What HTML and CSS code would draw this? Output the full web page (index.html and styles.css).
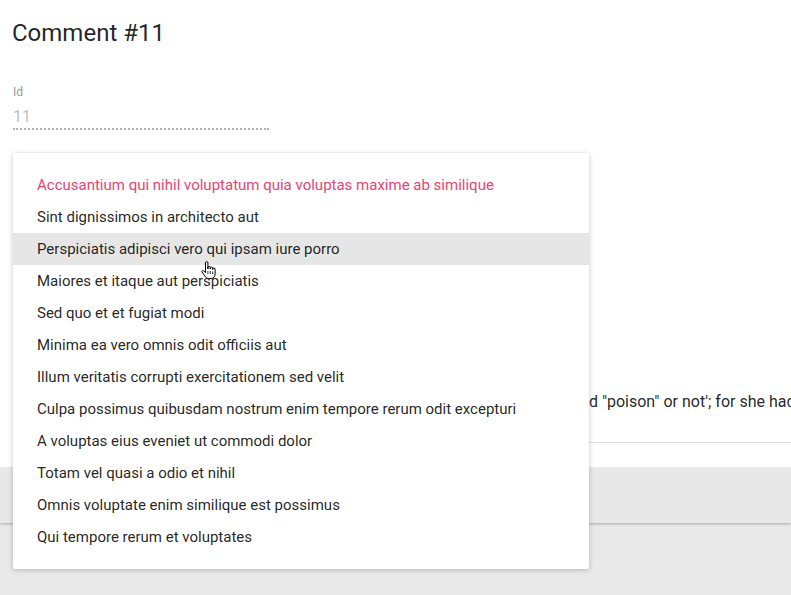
FILE: index.html
```html
<!DOCTYPE html>
<html>
<head>
<meta charset="utf-8">
<link rel="stylesheet" href="styles.css">
</head>
<body>
<div class="card">
  <div class="card-title"><h1>Comment #11</h1></div>
  <div class="form">
    <div class="field field-id">
      <label class="field-label">Id</label>
      <div class="field-value">11</div>
    </div>
    <div class="field field-body">
      <div class="body-text"><span class="body-lead">'and see whether it's marke</span>d "poison" or not'; for she had read several nice little histories about children</div>
    </div>
  </div>
  <div class="toolbar"></div>
</div>

<div class="menu">
  <ul class="menu-list">
    <li class="menu-item selected">Accusantium qui nihil voluptatum quia voluptas maxime ab similique</li>
    <li class="menu-item">Sint dignissimos in architecto aut</li>
    <li class="menu-item hover">Perspiciatis adipisci vero qui ipsam iure porro</li>
    <li class="menu-item">Maiores et itaque aut perspiciatis</li>
    <li class="menu-item">Sed quo et et fugiat modi</li>
    <li class="menu-item">Minima ea vero omnis odit officiis aut</li>
    <li class="menu-item">Illum veritatis corrupti exercitationem sed velit</li>
    <li class="menu-item">Culpa possimus quibusdam nostrum enim tempore rerum odit excepturi</li>
    <li class="menu-item">A voluptas eius eveniet ut commodi dolor</li>
    <li class="menu-item">Totam vel quasi a odio et nihil</li>
    <li class="menu-item">Omnis voluptate enim similique est possimus</li>
    <li class="menu-item">Qui tempore rerum et voluptates</li>
  </ul>
</div>

<svg class="cursor" width="17" height="19" viewBox="0 0 17 19">
  <path d="M5.5 1.8 a1.2 1.2 0 0 1 2.4 0 V8 V6.6 a1.2 1.2 0 0 1 2.4 0 V8 V7.2 a1.2 1.2 0 0 1 2.4 0 V8.6 V8.2 a1.2 1.2 0 0 1 2.4 0 V13 c0 2.5 -1.5 4.5 -4 4.5 H8.5 c-1.5 0 -2.5 -0.8 -3.3 -2 L2 11 c-0.6 -0.9 0.6 -2 1.5 -1.2 L5.5 11.5 Z" fill="#fff" stroke="#000" stroke-width="1" stroke-linejoin="round"/>
  <path d="M7.9 13 V10 M10.3 13 V10 M12.7 13 V10.5" stroke="#000" stroke-width="0.8"/>
</svg>
</body>
</html>
```

FILE: styles.css
```css
html, body {
  margin: 0;
  padding: 0;
}

body {
  background: #e9e9e9;
  font-family: Roboto, "Noto Sans", "Liberation Sans", sans-serif;
  color: rgba(0, 0, 0, 0.87);
  width: 791px;
  height: 595px;
  overflow: hidden;
  position: relative;
}

.card {
  background: #fff;
  box-shadow: 0 1px 3px rgba(0, 0, 0, 0.16), 0 1px 2px rgba(0, 0, 0, 0.12);
  overflow: hidden;
}

.card-title {
  padding: 15px 12px 17px;
}

.card-title h1 {
  margin: 0;
  font-size: 24px;
  line-height: 36px;
  font-weight: 400;
  color: rgba(0, 0, 0, 0.87);
}

.form {
  padding: 0 0 0 13px;
}

.field-id {
  width: 256px;
  padding-top: 16px;
}

.field-label {
  display: block;
  font-size: 12px;
  line-height: 16px;
  color: rgba(0, 0, 0, 0.45);
}

.field-value {
  margin-top: 6px;
  font-size: 16px;
  line-height: 22px;
  color: rgba(0, 0, 0, 0.28);
  border-bottom: 2px dotted rgba(0, 0, 0, 0.3);
}

.field-body {
  margin-top: 260px;
  padding-bottom: 28px;
  border-bottom: 1px solid #e0e0e0;
  margin-bottom: 24px;
}

.body-text {
  font-size: 16px;
  line-height: 24px;
  white-space: nowrap;
  color: rgba(0, 0, 0, 0.87);
}

.body-lead {
  display: inline-block;
  width: 576px;
  text-align: right;
}

.toolbar {
  height: 56px;
  background: #e8e8e8;
}

.menu {
  position: absolute;
  top: 153px;
  left: 13px;
  width: 576px;
  background: #fff;
  border-radius: 2px;
  box-shadow: 0 1px 6px rgba(0, 0, 0, 0.12), 0 1px 4px rgba(0, 0, 0, 0.12);
}

.menu-list {
  list-style: none;
  margin: 0;
  padding: 16px 0;
}

.menu-item {
  height: 32px;
  line-height: 32px;
  padding: 0 24px;
  font-size: 15px;
  color: rgba(0, 0, 0, 0.87);
  white-space: nowrap;
}

.menu-item.selected {
  color: #e94471;
}

.menu-item.hover {
  background: rgba(0, 0, 0, 0.098);
}

.cursor {
  position: absolute;
  left: 200px;
  top: 261px;
}
```
